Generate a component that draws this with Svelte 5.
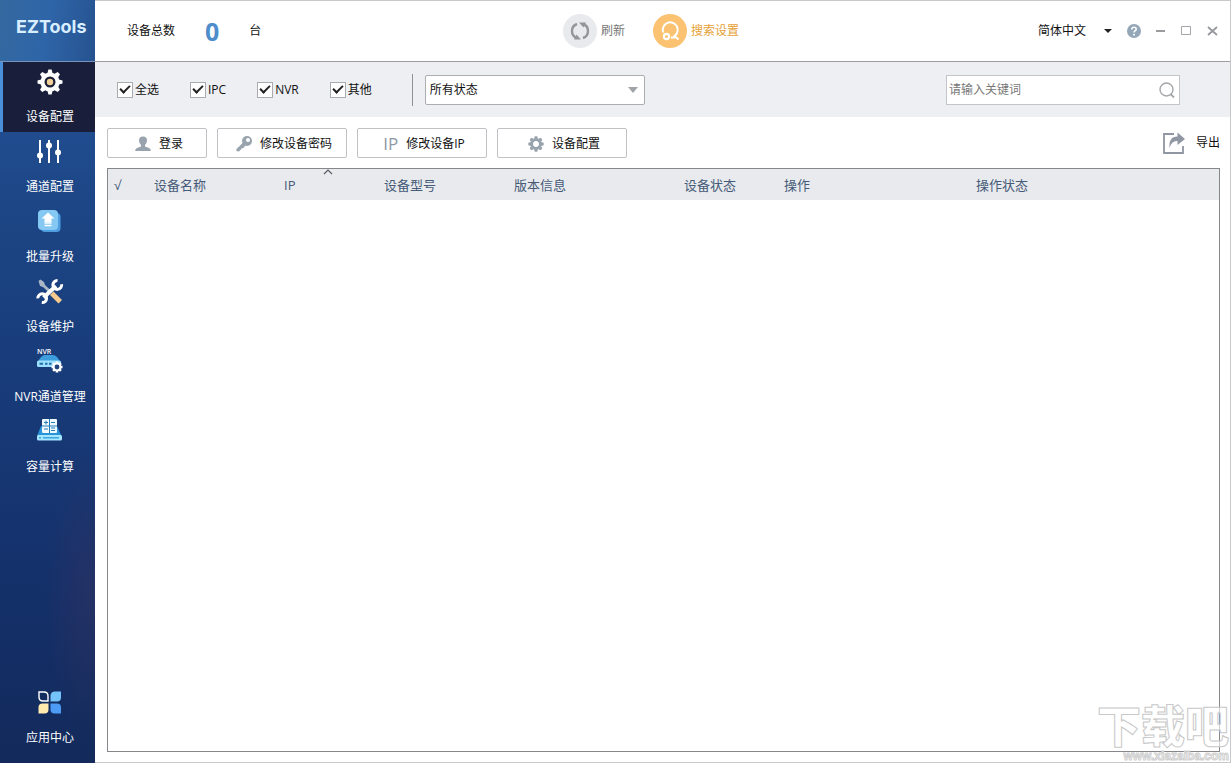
<script>
  let active = $state('device');
  let status = $state('all');
  let keyword = $state('');
  let language = $state('zh');

  const menu = [
    { id: 'device', label: '设备配置' },
    { id: 'channel', label: '通道配置' },
    { id: 'upgrade', label: '批量升级' },
    { id: 'maintain', label: '设备维护' },
    { id: 'nvr', label: 'NVR通道管理' },
    { id: 'capacity', label: '容量计算' }
  ];

  let filters = $state([
    { id: 'all', label: '全选', checked: true },
    { id: 'ipc', label: 'IPC', checked: true },
    { id: 'nvr', label: 'NVR', checked: true },
    { id: 'other', label: '其他', checked: true }
  ]);

  const gearAngles = [0, 45, 90, 135, 180, 225, 270, 315];
</script>

{#snippet menuIcon(id)}
  <svg class="menu_icon" viewBox="0 0 28 28" aria-hidden="true">
    {#if id === 'device'}
      <g fill="#fff">
        {#each gearAngles as a}
          <path d="M11.2 6 L12.4 1.5 H15.6 L16.8 6Z" transform="rotate({a} 14 14)" />
        {/each}
        <circle cx="14" cy="14" r="9.6" />
      </g>
      <circle cx="14" cy="14" r="5.5" fill="#1b2038" />
      <circle cx="14" cy="14" r="3.2" fill="#f3cf98" />
    {:else if id === 'channel'}
      <path d="M4 2V25M13 2V25M22 2V25" stroke="#fff" stroke-width="2" />
      <g fill="#fff">
        <circle cx="4" cy="17.5" r="3" />
        <circle cx="13" cy="7.5" r="3" />
        <circle cx="22" cy="14.5" r="3" />
      </g>
    {:else if id === 'upgrade'}
      <rect x="5" y="5" width="19.5" height="19" rx="4" fill="#4f9fe0" />
      <rect x="2" y="2" width="20" height="20" rx="4" fill="#84c8f3" />
      <path d="M12 4.5 L18.5 10.5 H15.5 V14 H8.5 V10.5 H5.5Z" fill="#fff" />
      <path d="M8.5 15H15.5M8.5 17.5H15.5" stroke="#fff" stroke-width="1.6" />
    {:else if id === 'maintain'}
      <path d="M2.5 3 L4.5 1.5 L8 4 L9 7 L15 12.5 L13 14.5 L7 9 L4 8Z" fill="#a9b6c6" />
      <path d="M14 17 L17.5 13.5 L26 22 L22.5 25.5Z" fill="#f6c98f" />
      <path d="M7.5 19.5 L20 8" stroke="#fff" stroke-width="4" />
      <path d="M21.5 2.6A4.4 4.4 0 1 0 25.6 6.2" fill="none" stroke="#fff" stroke-width="3" />
      <path d="M1.8 20.4A4.4 4.4 0 1 1 5.8 24.6" fill="none" stroke="#fff" stroke-width="3" />
    {:else if id === 'nvr'}
      <path d="M2 14Q5 7 9 7H17Q21 7 24 14Z" fill="#3e9ddd" />
      <rect x="1" y="12.5" width="24" height="6.5" rx="1.5" fill="#9be1ff" />
      <path d="M3.5 15.7H7M9 15.7H11.5M13 15.7H15.5" stroke="#236da9" stroke-width="2" />
      <g fill="#fff">
        {#each gearAngles as a}
          <rect x="19.7" y="13.5" width="2.6" height="3" transform="rotate({a} 21 19)" />
        {/each}
        <circle cx="21" cy="19" r="4.4" />
      </g>
      <circle cx="21" cy="19" r="2.4" fill="#21457e" />
      <text x="1" y="6" fill="#fff" font-size="7" font-weight="600">NVR</text>
    {:else if id === 'capacity'}
      <path d="M5 8H21L25.5 18H1Z" fill="#2992d8" />
      <rect x="1" y="17" width="25" height="5.5" rx="1.5" fill="#a6e6ff" />
      <path d="M3 19.7H5M7 19.7H23" stroke="#3aa5df" stroke-width="1.4" />
      <rect x="6" y="1" width="15" height="14" rx="1" fill="#effaff" />
      <path d="M8 4.5H12M10 2.5V6.5M15 4.5H19M8 11H12M15 10H19M15 12.5H19M13.5 1V15M6 8H21" stroke="#247dbb" stroke-width="1" />
    {:else}
      <path d="M3 3H8Q12 3 12 7V12H7Q3 12 3 8Z" fill="none" stroke="#fff" stroke-width="1.4" />
      <path d="M19 2.5H25V8.5Q25 12.5 21 12.5H14.5V7Q14.5 2.5 19 2.5Z" fill="#75c3fb" />
      <path d="M6.5 14.5H12.5V20.5Q12.5 24.5 8.5 24.5H2.5V18.5Q2.5 14.5 6.5 14.5Z" fill="#ffebae" />
      <path d="M14.5 14.5H21Q25 14.5 25 18.5V24.5H18.5Q14.5 24.5 14.5 20.5Z" fill="#4c9cf6" />
    {/if}
  </svg>
{/snippet}

<div class="app">
  <aside class="sidebar">
    <div class="logo">EZTools</div>
    <nav class="menu">
      {#each menu as item}
        <button class="menu_item" class:active={active === item.id} onclick={() => (active = item.id)}>
          {@render menuIcon(item.id)}
          <span>{item.label}</span>
        </button>
      {/each}
      <button class="menu_item bottom" class:active={active === 'apps'} onclick={() => (active = 'apps')}>
        {@render menuIcon('apps')}
        <span>应用中心</span>
      </button>
    </nav>
  </aside>

  <main class="main">
    <header class="header">
      <div class="total">
        <span>设备总数</span>
        <strong>0</strong>
        <span>台</span>
      </div>
      <div class="actions">
        <button class="round_button">
          <svg viewBox="0 0 34 34" aria-hidden="true">
            <circle cx="17" cy="17" r="17" fill="#e9eaed" />
            <path d="M14 24A7.4 7.4 0 0 1 14 10M20 10A7.4 7.4 0 0 1 20 24" fill="none" stroke="#929599" stroke-width="2.4" />
            <path d="M16 8.5H23L20.5 13.5ZM18 25.5H11L13.5 20.5Z" fill="#929599" />
          </svg>
          <span>刷新</span>
        </button>
        <button class="round_button search_setting">
          <svg viewBox="0 0 34 34" aria-hidden="true">
            <circle cx="17" cy="17" r="17" fill="#fbc272" />
            <path d="M10.2 18.5A7.5 7.5 0 1 1 21.5 22L25.5 25.5M18 23.5H22" fill="none" stroke="#fff" stroke-width="2" />
            <circle cx="13.5" cy="22.5" r="2.6" fill="none" stroke="#fff" stroke-width="2.2" />
          </svg>
          <span>搜索设置</span>
        </button>
      </div>
      <div class="window_tools">
        <div class="language">
          <select aria-label="语言" bind:value={language}>
            <option value="zh">简体中文</option>
          </select>
          <svg viewBox="0 0 8 4" aria-hidden="true"><path d="M0 0H8L4 4Z" fill="#222" /></svg>
        </div>
        <button class="tool" aria-label="帮助">
          <svg viewBox="0 0 14 14">
            <circle cx="7" cy="7" r="7" fill="#94a7b8" />
            <path d="M4.8 5.5Q4.8 3.3 7 3.3T9.2 5.2Q9.2 6.2 8 6.9Q7 7.5 7 8.5" fill="none" stroke="#fff" stroke-width="1.6" />
            <circle cx="7" cy="10.7" r="1" fill="#fff" />
          </svg>
        </button>
        <button class="tool" aria-label="最小化">
          <svg viewBox="0 0 14 14"><path d="M3 7H12" stroke="#9a9ca0" stroke-width="2" /></svg>
        </button>
        <button class="tool" aria-label="最大化">
          <svg viewBox="0 0 14 14"><path d="M2.5 2.5H11.5V10.5H2.5Z" fill="none" stroke="#a3a5a9" /></svg>
        </button>
        <button class="tool" aria-label="关闭">
          <svg viewBox="0 0 14 14"><path d="M3 3L12 11M12 3L3 11" stroke="#97999d" stroke-width="1.8" /></svg>
        </button>
      </div>
    </header>

    <section class="filters">
      <div class="checks">
        {#each filters as f}
          <label class="check">
            <input type="checkbox" bind:checked={f.checked} />
            <span>{f.label}</span>
          </label>
        {/each}
      </div>
      <div class="divider"></div>
      <div class="status">
        <select aria-label="状态" bind:value={status}>
          <option value="all">所有状态</option>
        </select>
        <svg viewBox="0 0 10 6" aria-hidden="true"><path d="M0 0H10L5 6Z" fill="#a0a3a8" /></svg>
      </div>
      <div class="search">
        <input type="text" aria-label="关键词" placeholder="请输入关键词" bind:value={keyword} />
        <button aria-label="搜索">
          <svg viewBox="0 0 16 16"><circle cx="7.5" cy="7.5" r="6.5" fill="none" stroke="#a4a6a9" stroke-width="1.4" /><path d="M11.5 12L15 15.5" stroke="#a4a6a9" stroke-width="1.8" /></svg>
        </button>
      </div>
    </section>

    <section class="toolbar">
      <button class="tool_button small">
        <svg viewBox="0 0 16 16" aria-hidden="true"><path d="M8 0.5Q12 0.5 12 4.5Q12 7 10 9V10.5L14 12Q15.8 12.7 15.8 15H0.2Q0.2 12.7 2 12L6 10.5V9Q4 7 4 4.5Q4 0.5 8 0.5Z" fill="#98a3ae" /></svg>
        <span>登录</span>
      </button>
      <button class="tool_button">
        <svg viewBox="0 0 16 16" aria-hidden="true"><path d="M7 7L0.8 13V15H3.5V13.5H5V12H7L9.5 9Z" fill="#98a3ae" stroke="#98a3ae" stroke-width="0.6" /><circle cx="11" cy="5" r="5" fill="#98a3ae" /><circle cx="12" cy="4" r="2" fill="#fff" /></svg>
        <span>修改设备密码</span>
      </button>
      <button class="tool_button">
        <span class="ip_icon" aria-hidden="true">IP</span>
        <span>修改设备IP</span>
      </button>
      <button class="tool_button">
        <svg viewBox="0 0 16 16" aria-hidden="true">
          {#each gearAngles as a}
            <path d="M6 3L6.8 0.3H9.2L10 3Z" fill="#98a3ae" transform="rotate({a} 8 8)" />
          {/each}
          <circle cx="8" cy="8" r="4.3" fill="none" stroke="#98a3ae" stroke-width="2.8" />
        </svg>
        <span>设备配置</span>
      </button>
      <button class="export">
        <svg viewBox="0 0 24 24" aria-hidden="true">
          <path d="M12 3H2V22H21V15" fill="none" stroke="#9096a2" stroke-width="1.8" />
          <path d="M7.5 17Q6.500 5.5 15.5 5.5V1.5L23 8L15.5 14V10Q9.5 9.5 7.5 17Z" fill="#9096a2" />
        </svg>
        <span>导出</span>
      </button>
    </section>

    <section class="table_wrap">
      <table>
        <thead>
          <tr>
            <th class="w_check">√</th>
            <th class="w_name">设备名称</th>
            <th class="w_ip">
              IP
              <svg class="sort" viewBox="0 0 10 6" aria-hidden="true"><path d="M1 5L5 1L9 5" fill="none" stroke="#555b66" stroke-width="1.2" /></svg>
            </th>
            <th class="w_model">设备型号</th>
            <th class="w_version">版本信息</th>
            <th class="w_status">设备状态</th>
            <th class="w_action">操作</th>
            <th>操作状态</th>
          </tr>
        </thead>
        <tbody></tbody>
      </table>
    </section>
  </main>

  <div class="watermark">
    <span class="mark_name">下载吧</span>
    <span class="mark_url">www.xiazaiba.com</span>
  </div>
</div>

<style>
:global(body){
  margin: 0;
}

.app{
  position: relative;
  display: flex;
  box-sizing: border-box;
  min-height: 100vh;
  overflow: hidden;
  background: #fff;
  color: #111;
  font-family: "Open Sans", "Noto Sans CJK SC", sans-serif;
  font-size: 12px;
  line-height: 16px;
}

button, input, select{
  font: inherit;
  color: inherit;
  margin: 0;
}

button{
  background: none;
  border: 0;
  padding: 0;
  cursor: pointer;
}

svg{
  display: block;
  flex: none;
}

.sidebar{
  display: flex;
  flex-direction: column;
  flex: none;
  width: 95px;
  background:
    radial-gradient(ellipse 50px 150px at 100% 78%, rgba(58,50,95,.45), transparent),
    linear-gradient(#2858a0, #1d4787 25%, #183b79 50%, #14316b 75%, #132a5b);
}

.logo{
  box-sizing: border-box;
  height: 62px;
  padding: 15px 0 0 16px;
  border-bottom: 1px solid #7894bd;
  background: linear-gradient(100deg, #34699f, #2e65a8 50%, #26528f);
  color: #d9eeff;
  font-family: Inter, sans-serif;
  font-size: 18px;
  font-weight: 700;
  line-height: 24px;
}

.menu{
  display: flex;
  flex-direction: column;
  flex: 1;
  padding-bottom: 10px;
}

.menu_item{
  display: flex;
  flex-direction: column;
  align-items: center;
  gap: 13px;
  box-sizing: border-box;
  height: 70px;
  padding: 6px 0 0 2px;
  border-left: 3px solid transparent;
  color: #fff;
  white-space: nowrap;
}

.menu_item.active{
  background: #191f3a;
  border-left-color: #4b8fdb;
}

.menu_item.bottom{
  margin-top: auto;
}

.menu_icon{
  width: 28px;
  height: 28px;
}

.main{
  display: flex;
  flex-direction: column;
  flex: 1;
  min-width: 0;
  border: 1px solid #c8c8cb;
  border-left: 0;
}

.header{
  display: grid;
  grid-template-columns: 436px auto 1fr;
  align-items: center;
  height: 60px;
  padding: 0 11px 0 32px;
  border-bottom: 1px solid #9c9ca2;
}

.total{
  display: flex;
  align-items: center;
  gap: 30px;
}

.total strong{
  color: #4e8dcc;
  font-size: 25px;
  line-height: 24px;
}

.actions{
  display: flex;
  gap: 28px;
}

.round_button{
  display: flex;
  align-items: center;
  gap: 4px;
  color: #777;
}

.round_button svg{
  width: 34px;
  height: 34px;
}

.search_setting{
  color: #e5a134;
}

.window_tools{
  display: flex;
  align-items: center;
  justify-content: flex-end;
  gap: 12px;
}

.language{
  position: relative;
  margin-right: 3px;
}

.language select{
  display: block;
  appearance: none;
  width: 74px;
  padding: 0;
  border: 0;
  background: none;
}

.language svg{
  position: absolute;
  right: 0;
  top: 6px;
  width: 8px;
  height: 4px;
  pointer-events: none;
}

.tool svg{
  width: 14px;
  height: 14px;
}

.filters{
  display: flex;
  align-items: center;
  height: 55px;
  padding: 0 50px 0 22px;
  background: #eeeff3;
}

.checks{
  display: flex;
  gap: 31px;
}

.check{
  display: flex;
  align-items: center;
  gap: 2px;
}

.check input{
  appearance: none;
  display: grid;
  place-items: center;
  box-sizing: border-box;
  width: 16px;
  height: 16px;
  border: 1px solid #a9abae;
  background: #fff;
}

.check input:checked::after{
  content: "";
  width: 8px;
  height: 4px;
  margin-bottom: 3px;
  border: solid #222;
  border-width: 0 0 2px 2px;
  box-sizing: content-box;
  transform: rotate(-45deg);
}

.divider{
  width: 1px;
  height: 32px;
  margin: 0 12px 0 40px;
  background: #8f9298;
}

.status{
  position: relative;
  width: 220px;
}

.status select{
  display: block;
  appearance: none;
  box-sizing: border-box;
  width: 100%;
  height: 30px;
  padding: 0 24px 0 4px;
  border: 1px solid #abadb1;
  border-radius: 2px;
  background: #fff;
}

.status svg{
  position: absolute;
  right: 7px;
  top: 12px;
  width: 10px;
  height: 6px;
  pointer-events: none;
}

.search{
  display: flex;
  align-items: center;
  box-sizing: border-box;
  width: 234px;
  height: 30px;
  margin-left: auto;
  padding: 0 4px 0 2px;
  border: 1px solid #c4c5c8;
  background: #fff;
}

.search input{
  flex: 1;
  min-width: 0;
  padding: 0;
  border: 0;
  outline: 0;
  background: none;
}

.search input::placeholder{
  color: #777;
}

.search svg{
  width: 16px;
  height: 16px;
}

.toolbar{
  display: flex;
  align-items: center;
  gap: 10px;
  padding: 11px 10px 10px 12px;
}

.tool_button{
  display: flex;
  align-items: center;
  justify-content: center;
  gap: 8px;
  box-sizing: border-box;
  width: 130px;
  height: 30px;
  padding: 2px 0 0 4px;
  border: 1px solid #c0c1c4;
  border-radius: 2px;
}

.tool_button.small{
  width: 100px;
}

.tool_button svg{
  width: 16px;
  height: 16px;
}

.ip_icon{
  color: #8e99a4;
  font-size: 17px;
}

.export{
  display: flex;
  align-items: center;
  gap: 10px;
  margin-left: auto;
}

.export svg{
  width: 24px;
  height: 24px;
}

.table_wrap{
  flex: 1;
  margin: 0 10px 10px 12px;
  border: 1px solid #85878b;
}

table{
  width: 100%;
  table-layout: fixed;
  border-collapse: collapse;
}

th{
  position: relative;
  height: 31px;
  padding: 0 0 0 6px;
  background: #e9eaee;
  color: #465b78;
  font-size: 13px;
  font-weight: 400;
  text-align: left;
}

.w_check{ width: 34px; }
.w_name{ width: 124px; }
.w_ip{ width: 94px; }
.w_model{ width: 124px; }
.w_version{ width: 164px; }
.w_status{ width: 94px; }
.w_action{ width: 186px; }

.sort{
  position: absolute;
  left: 45px;
  top: 0;
  width: 10px;
  height: 6px;
}

.watermark{
  position: absolute;
  right: 2px;
  bottom: 0;
  display: flex;
  flex-direction: column;
  align-items: flex-end;
  color: rgba(255,255,255,.6);
  font-weight: 900;
  pointer-events: none;
}

.mark_name{
  font-size: 44px;
  line-height: 46px;
  -webkit-text-stroke: 1px #c8c8c8;
}

.mark_url{
  font-family: "Liberation Sans", sans-serif;
  font-size: 12px;
  font-weight: 700;
  line-height: 14px;
  -webkit-text-stroke: 1px #cfcfcf;
}
</style>
